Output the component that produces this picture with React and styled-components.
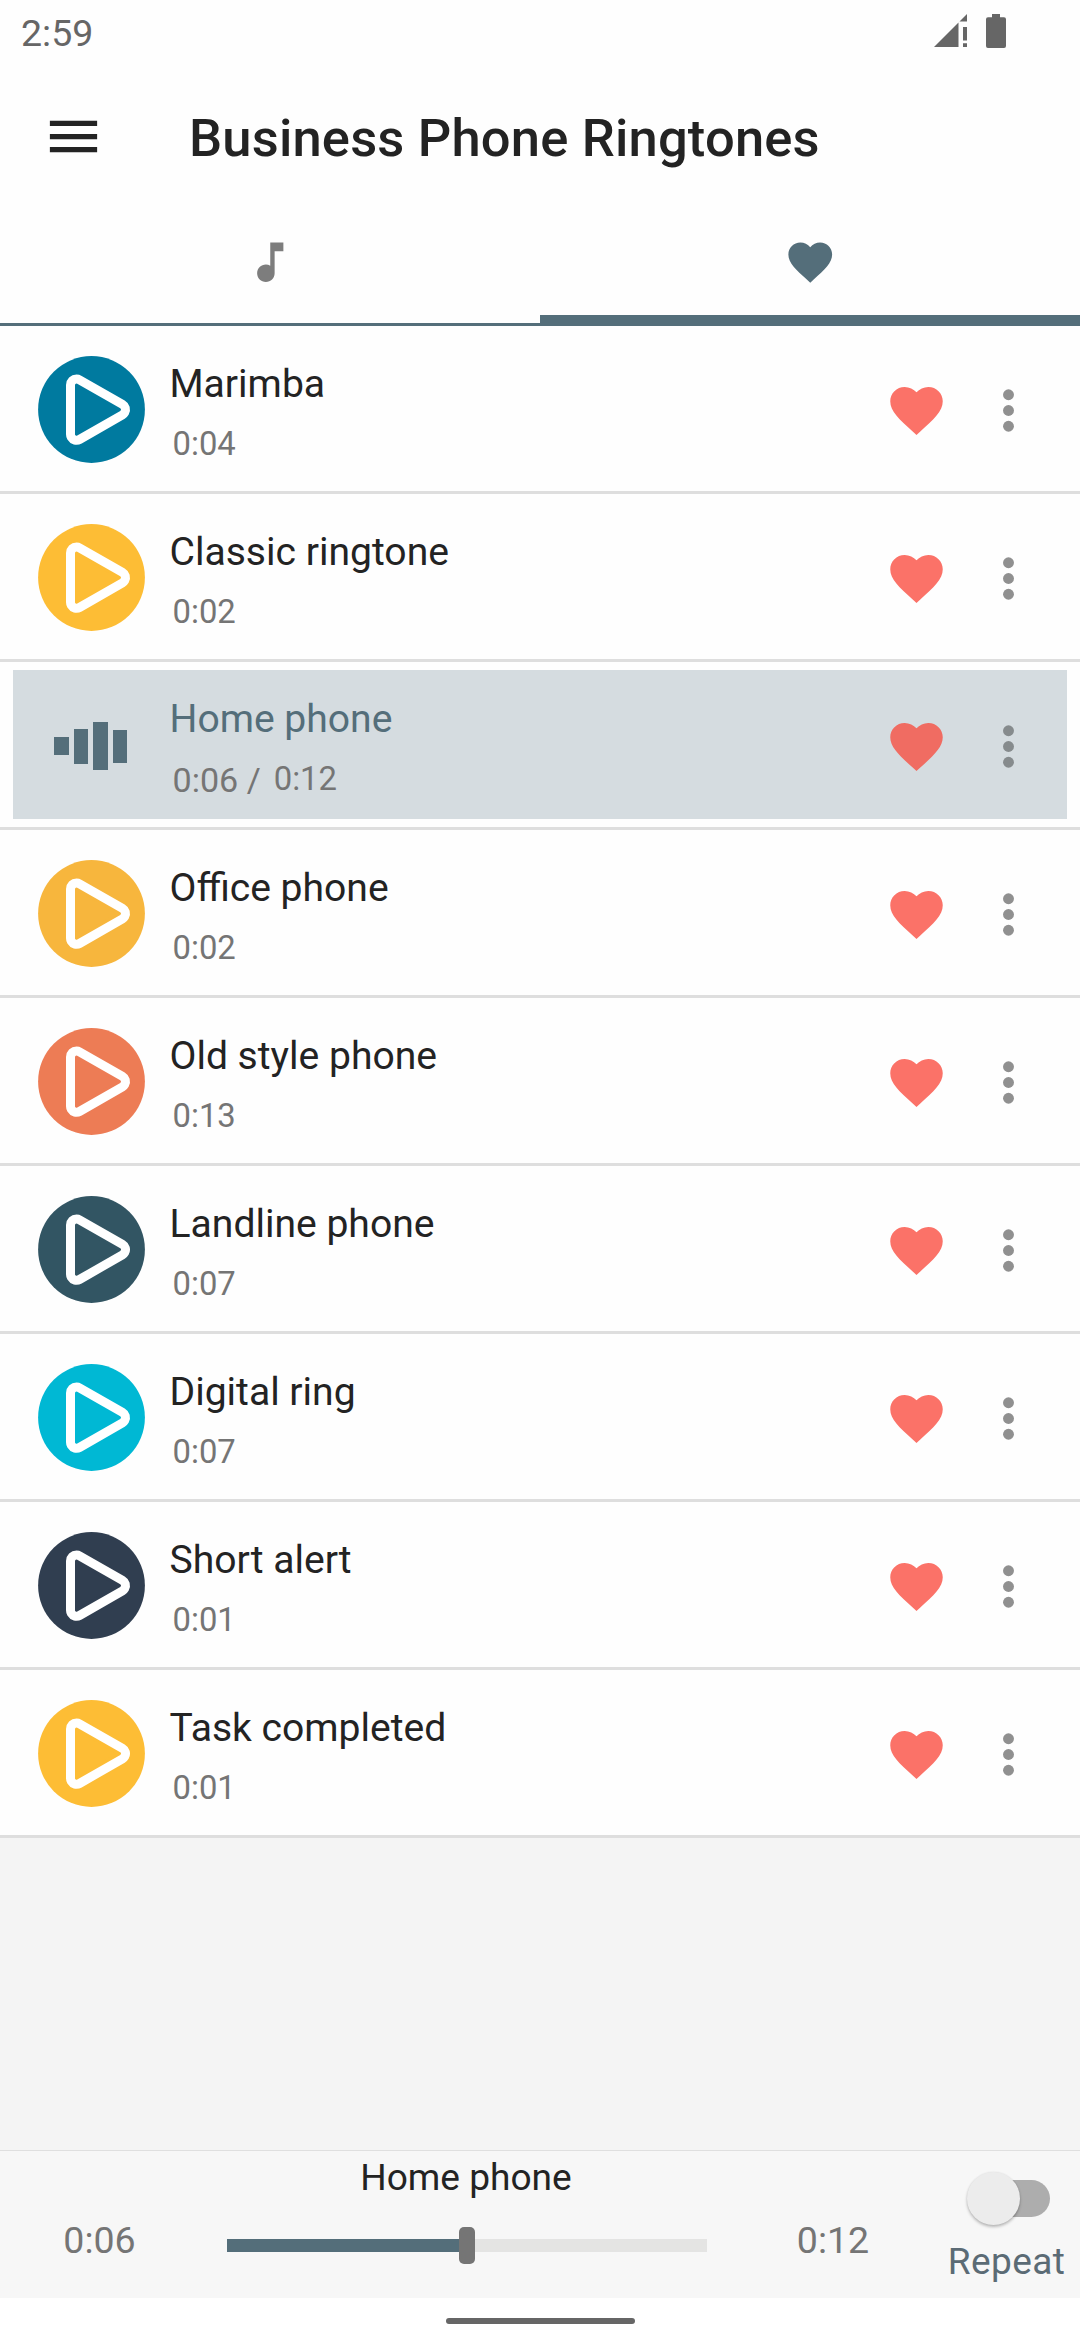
import React from 'react';
import styled, { createGlobalStyle } from 'styled-components';

const slate = '#546e7a';
const ink = '#232323';

const Global = createGlobalStyle`
  * { box-sizing: border-box; }
  html, body { margin: 0; padding: 0; background: #ffffff; }
  body { font-family: Roboto, "Liberation Sans", sans-serif; color: ${ink}; }
  svg { display: block; flex: none; }
`;

const Screen = styled.div`
  width: 1080px;
  height: 2340px;
  display: flex;
  flex-direction: column;
  background: #fefefe;
  overflow: hidden;
`;

const StatusBar = styled.header`
  height: 63px;
  flex: none;
  display: flex;
  align-items: flex-start;
  justify-content: space-between;
  padding: 11px 74px 0 21px;
  color: #666666;
`;

const Clock = styled.span`
  font-size: 37.5px;
  line-height: 44px;
`;

const StatusIcons = styled.div`
  display: flex;
  gap: 19px;
  margin-top: 3px;
`;

const AppBar = styled.div`
  height: 147px;
  flex: none;
  display: flex;
  align-items: center;
  padding-left: 42px;
`;

const MenuButton = styled.button`
  border: 0;
  padding: 0;
  background: none;
  color: ${ink};
`;

const Title = styled.h1`
  margin: 3px 0 0 84px;
  font-size: 52.5px;
  line-height: 62px;
  font-weight: 500;
  letter-spacing: 0.18px;
  white-space: nowrap;
`;

const Tabs = styled.nav`
  height: 116px;
  flex: none;
  display: grid;
  grid-template-columns: 1fr 1fr;
`;

const Tab = styled.div`
  display: flex;
  justify-content: center;
  align-items: flex-start;
  padding-top: 26px;
  color: ${(p) => (p.$active ? slate : '#7d7d7d')};
  border-bottom: ${(p) => (p.$active ? 11 : 3)}px solid ${slate};
  height: 116px;
`;

const List = styled.main`
  flex: 1;
  background: #f4f4f4;
`;

const Row = styled.div`
  height: 168px;
  padding: 8px 13px;
  background: #fefefe;
  border-bottom: 3px solid #dedede;
`;

const RowBody = styled.div`
  height: 149px;
  display: flex;
  align-items: flex-start;
  background: ${(p) => (p.$playing ? '#d5dce0' : 'transparent')};
`;

const Artwork = styled.div`
  width: 107px;
  height: 107px;
  flex: none;
  margin: 22px 0 0 25px;
`;

const Bars = styled.div`
  height: 108px;
  display: flex;
  align-items: center;
  gap: 5px;
  padding-left: 16px;
`;

const Bar = styled.i`
  width: 14.6px;
  height: ${(p) => p.$h}px;
  background: ${slate};
`;

const Info = styled.div`
  flex: 1;
  display: flex;
  flex-direction: column;
  padding: ${(p) => (p.$playing ? 25 : 26)}px 0 0 24.5px;
`;

const Name = styled.span`
  font-size: 39.1px;
  line-height: 48px;
  color: ${(p) => (p.$playing ? slate : ink)};
  white-space: nowrap;
`;

const Times = styled.div`
  display: flex;
  align-items: baseline;
  margin: ${(p) => (p.$playing ? 17 : 16)}px 0 0 3px;
  line-height: 40px;
  color: #757575;
  white-space: pre;
`;

const Elapsed = styled.span`
  font-size: 34.1px;
`;

const Duration = styled.span`
  font-size: 32.8px;
  padding-left: ${(p) => (p.$after ? 13 : 0)}px;
  margin-top: ${(p) => (p.$after ? -1 : 0)}px;
  align-self: flex-start;
`;

const Actions = styled.div`
  display: flex;
  gap: 29px;
  padding: 45px 27px 0 0;
`;

const HeartSlot = styled.span`
  color: ${(p) => (p.$playing ? '#f06c62' : '#fb7268')};
`;

const MoreSlot = styled.span`
  color: ${(p) => (p.$playing ? '#868b8d' : '#909090')};
`;

const Player = styled.footer`
  height: 148px;
  flex: none;
  display: grid;
  grid-template-columns: 199px 534px 200px 147px;
  background: #f7f7f7;
  border-top: 1px solid #dfdfdf;
`;

const PlayerTime = styled.div`
  padding-top: 65px;
  text-align: center;
  font-size: 37.5px;
  line-height: 48px;
  color: #757575;
`;

const PlayerCenter = styled.div`
  display: flex;
  flex-direction: column;
  align-items: center;
`;

const PlayerTitle = styled.span`
  margin-top: 3px;
  font-size: 37.1px;
  line-height: 48px;
`;

const Slider = styled.div`
  width: 480px;
  height: 37px;
  margin: 25px 0 0 1px;
  display: flex;
  align-items: center;
`;

const SliderFill = styled.div`
  width: 232.5px;
  height: 13px;
  background: ${slate};
`;

const SliderThumb = styled.div`
  width: 16px;
  height: 37px;
  border-radius: 5px;
  background: #757575;
`;

const SliderRest = styled.div`
  flex: 1;
  height: 13px;
  background: #e4e4e3;
`;

const Repeat = styled.div`
  display: flex;
  flex-direction: column;
  align-items: center;
`;

const SwitchTrack = styled.div`
  width: 80px;
  height: 37px;
  margin: 29px 0 0 7px;
  display: flex;
  align-items: center;
  border-radius: 19px;
  background: #adadad;
`;

const SwitchThumb = styled.div`
  width: 53px;
  height: 53px;
  flex: none;
  margin-left: -3px;
  border-radius: 50%;
  background: #ececec;
  box-shadow: 0 2px 3px rgba(0, 0, 0, 0.25), 0 0 2px rgba(0, 0, 0, 0.08);
`;

const RepeatLabel = styled.span`
  margin-top: 23px;
  font-size: 37px;
  line-height: 44px;
  letter-spacing: 0.4px;
  color: #5b6b75;
`;

const NavBar = styled.div`
  height: 42px;
  flex: none;
  display: flex;
  justify-content: center;
  padding-top: 20px;
  background: #ffffff;
`;

const NavHandle = styled.div`
  width: 189px;
  height: 6px;
  border-radius: 3px;
  background: #666666;
`;

const HeartIcon = ({ size }) => (
  <svg width={size} height={size} viewBox="0 0 24 24" fill="currentColor">
    <path d="M12 21.35l-1.45-1.32C5.4 15.36 2 12.28 2 8.5 2 5.42 4.42 3 7.5 3c1.74 0 3.41.81 4.5 2.09C13.09 3.81 14.76 3 16.5 3 19.58 3 22 5.42 22 8.5c0 3.78-3.4 6.86-8.55 11.54L12 21.35z" />
  </svg>
);

const NoteIcon = () => (
  <svg width="52.5" height="52.5" viewBox="0 0 24 24" fill="currentColor">
    <path d="M12 3v10.55c-.59-.34-1.27-.55-2-.55-2.21 0-4 1.79-4 4s1.79 4 4 4 4-1.79 4-4V7h4V3h-6z" />
  </svg>
);

const MenuIcon = () => (
  <svg width="63" height="63" viewBox="0 0 24 24" fill="currentColor">
    <path d="M3 18h18v-2H3v2zm0-5h18v-2H3v2zm0-7v2h18V6H3z" />
  </svg>
);

const MoreIcon = () => (
  <svg width="63" height="63" viewBox="0 0 24 24" fill="currentColor">
    <circle cx="12" cy="6" r="2.08" />
    <circle cx="12" cy="12" r="2.08" />
    <circle cx="12" cy="18" r="2.08" />
  </svg>
);

const SignalIcon = () => (
  <svg width="33" height="34" viewBox="0 0 33 34" fill="currentColor">
    <path d="M0 33L24.5 8.5V33z" />
    <path d="M25.5 7.5L33 0V7.5z" />
    <path d="M29 13h4v13.500h-4zM29 29.300h4V33h-4z" />
  </svg>
);

const BatteryIcon = () => (
  <svg width="20" height="34" viewBox="0 0 20 34" fill="currentColor">
    <path d="M6 0h8v3.300h4a2 2 0 0 1 2 2V32a2 2 0 0 1-2 2H2a2 2 0 0 1-2-2V5.300a2 2 0 0 1 2-2h4z" />
  </svg>
);

const PlayIcon = ({ color }) => (
  <svg width="107" height="107" viewBox="0 0 107 107" strokeLinejoin="round">
    <circle cx="53.500" cy="53.500" r="53.400" fill={color} />
    <path d="M38.500 29L81.500 53.600L38.500 78.300z" fill="#fff" stroke="#fff" strokeWidth="21" />
    <path d="M38.500 29L81.500 53.600L38.500 78.300z" fill={color} stroke={color} strokeWidth="3" />
  </svg>
);

const ringtones = [
  { name: 'Marimba', time: '0:04', color: '#007a9f' },
  { name: 'Classic ringtone', time: '0:02', color: '#fdbd35' },
  { name: 'Home phone', time: '0:12', elapsed: '0:06' },
  { name: 'Office phone', time: '0:02', color: '#f7b63d' },
  { name: 'Old style phone', time: '0:13', color: '#ed7c55' },
  { name: 'Landline phone', time: '0:07', color: '#325563' },
  { name: 'Digital ring', time: '0:07', color: '#00b8d4' },
  { name: 'Short alert', time: '0:01', color: '#303e50' },
  { name: 'Task completed', time: '0:01', color: '#fdbd35' },
];

const RingtoneRow = ({ tone }) => {
  const playing = Boolean(tone.elapsed);
  return (
    <Row>
      <RowBody $playing={playing}>
        <Artwork>
          {playing ? (
            <Bars>
              <Bar $h={18} />
              <Bar $h={35} />
              <Bar $h={48} />
              <Bar $h={33} />
            </Bars>
          ) : (
            <PlayIcon color={tone.color} />
          )}
        </Artwork>
        <Info $playing={playing}>
          <Name $playing={playing}>{tone.name}</Name>
          <Times $playing={playing}>
            {playing && <Elapsed>{tone.elapsed + ' /'}</Elapsed>}
            <Duration $after={playing}>{tone.time}</Duration>
          </Times>
        </Info>
        <Actions>
          <HeartSlot $playing={playing}><HeartIcon size={63} /></HeartSlot>
          <MoreSlot $playing={playing}><MoreIcon /></MoreSlot>
        </Actions>
      </RowBody>
    </Row>
  );
};

export default function App() {
  return (
    <Screen>
      <Global />
      <StatusBar>
        <Clock>2:59</Clock>
        <StatusIcons>
          <SignalIcon />
          <BatteryIcon />
        </StatusIcons>
      </StatusBar>
      <AppBar>
        <MenuButton aria-label="Menu"><MenuIcon /></MenuButton>
        <Title>Business Phone Ringtones</Title>
      </AppBar>
      <Tabs>
        <Tab><NoteIcon /></Tab>
        <Tab $active><HeartIcon size={52.5} /></Tab>
      </Tabs>
      <List>
        {ringtones.map((tone) => (
          <RingtoneRow key={tone.name} tone={tone} />
        ))}
      </List>
      <Player>
        <PlayerTime>0:06</PlayerTime>
        <PlayerCenter>
          <PlayerTitle>Home phone</PlayerTitle>
          <Slider>
            <SliderFill />
            <SliderThumb />
            <SliderRest />
          </Slider>
        </PlayerCenter>
        <PlayerTime>0:12</PlayerTime>
        <Repeat>
          <SwitchTrack><SwitchThumb /></SwitchTrack>
          <RepeatLabel>Repeat</RepeatLabel>
        </Repeat>
      </Player>
      <NavBar><NavHandle /></NavBar>
    </Screen>
  );
}
